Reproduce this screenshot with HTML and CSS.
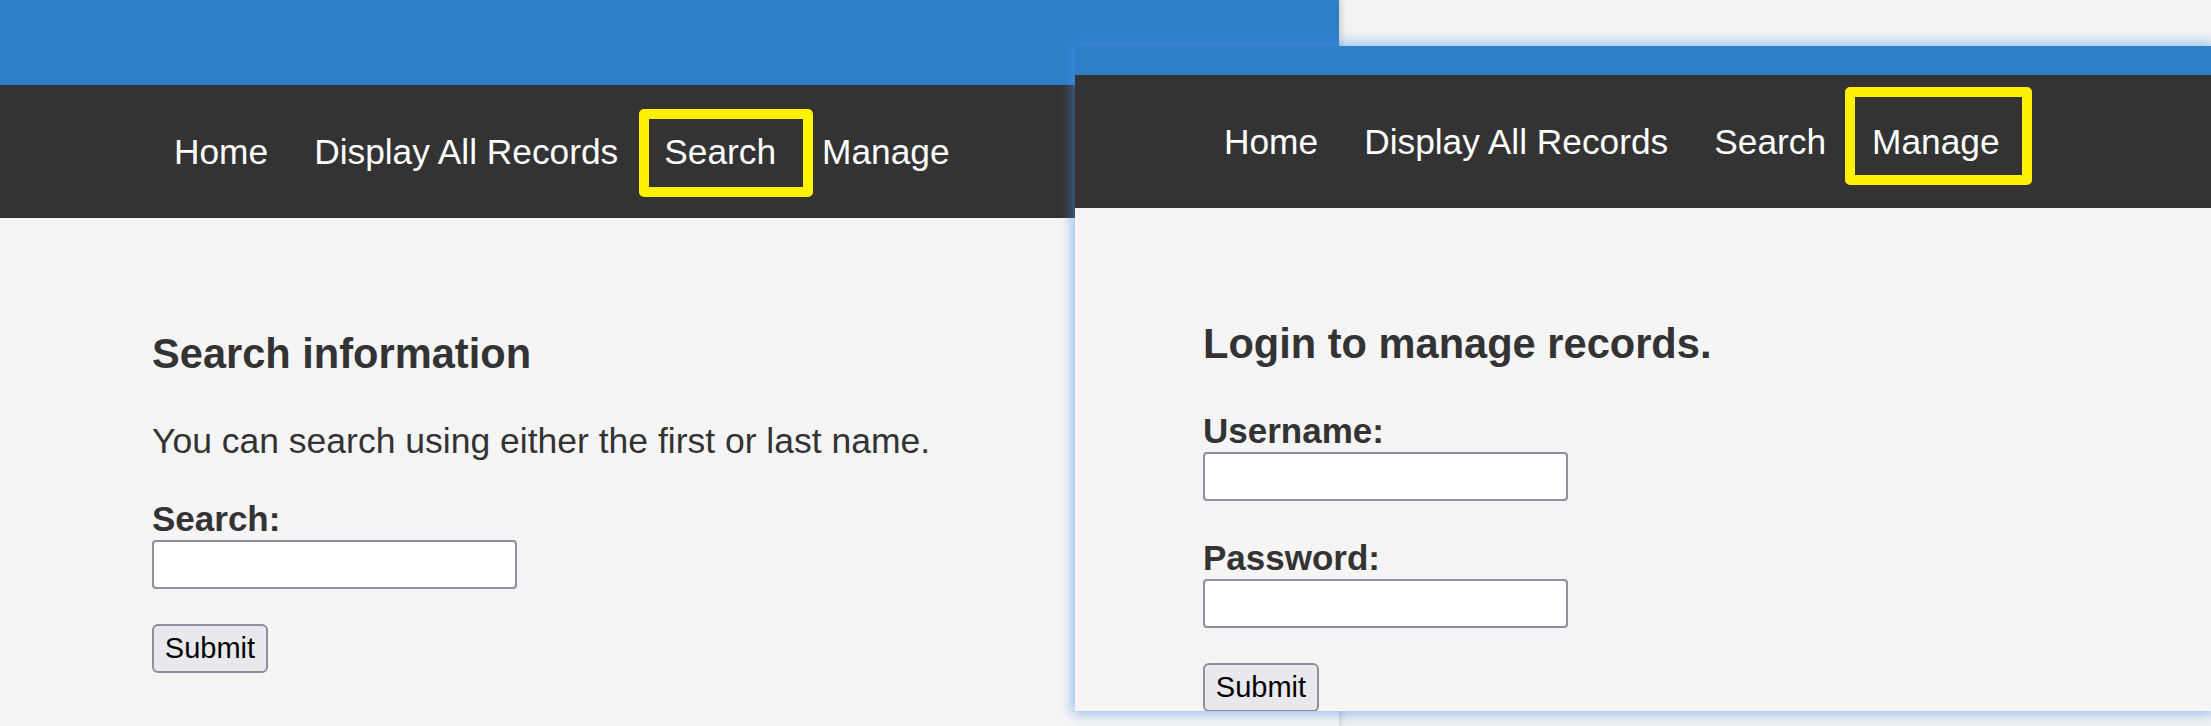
FILE: index.html
```html
<!DOCTYPE html>
<html lang="en">
<head>
<meta charset="utf-8">
<title>Records</title>
<link rel="stylesheet" href="styles.css">
</head>
<body>
<div class="desk">
  <section class="win win-left">
    <header class="hdr hdr-tall"></header>
    <nav class="nav nav-left">
      <a href="#">Home</a>
      <a href="#">Display All Records</a>
      <a href="#" class="mark mark-search">Search</a>
      <a href="#">Manage</a>
    </nav>
    <main class="content content-left">
      <h2 class="title">Search information</h2>
      <p class="intro">You can search using either the first or last name.</p>
      <form class="form">
        <label class="lbl lbl-after-text" for="q">Search:</label>
        <input class="field" id="q" type="text">
        <button class="btn" type="button">Submit</button>
      </form>
    </main>
  </section>

  <section class="win win-right">
    <header class="hdr hdr-short"></header>
    <nav class="nav nav-right">
      <a href="#">Home</a>
      <a href="#">Display All Records</a>
      <a href="#">Search</a>
      <a href="#" class="mark mark-manage">Manage</a>
    </nav>
    <main class="content content-right">
      <h2 class="title">Login to manage records.</h2>
      <form class="form">
        <label class="lbl lbl-after-title" for="u">Username:</label>
        <input class="field" id="u" type="text">
        <label class="lbl lbl-after-field" for="p">Password:</label>
        <input class="field" id="p" type="password">
        <button class="btn" type="button">Submit</button>
      </form>
    </main>
  </section>
</div>
</body>
</html>
```

FILE: styles.css
```css
* {
  box-sizing: border-box;
}

html, body {
  margin: 0;
  padding: 0;
}

body {
  width: 2211px;
  height: 726px;
  overflow: hidden;
  background: #f3f3f3;
  font-family: "Liberation Sans", Arial, sans-serif;
}

.desk {
  position: relative;
  width: 2211px;
  height: 726px;
}

.win {
  display: flex;
  flex-direction: column;
  background: #f5f5f5;
  overflow: hidden;
}

.win-left {
  width: 1339px;
  height: 726px;
  box-shadow: 2px 0 6px rgba(0, 0, 0, 0.16);
}

.win-right {
  position: absolute;
  left: 1075px;
  top: 46px;
  width: 1136px;
  height: 665px;
  box-shadow: 0 0 12px 3px rgba(70, 145, 235, 0.55);
}

.hdr {
  flex: none;
  background: #2d7fc7;
}

.hdr-tall {
  height: 85px;
}

.hdr-short {
  height: 29px;
}

.nav {
  flex: none;
  display: flex;
  height: 133px;
  background: #333333;
}

.nav-left {
  padding-left: 151px;
}

.nav-right {
  padding-left: 126px;
}

.nav a {
  padding: 0 23px;
  color: #ffffff;
  font-size: 35.3px;
  line-height: 133px;
  text-decoration: none;
  white-space: nowrap;
}

.mark {
  position: relative;
}

.mark::after {
  content: "";
  position: absolute;
  border: 10px solid #fff200;
  border-radius: 5px;
}

.mark-search::after {
  left: -2px;
  right: -14px;
  top: 24px;
  bottom: 21px;
}

.mark-manage::after {
  left: -4px;
  right: -9px;
  top: 12px;
  bottom: 23px;
}

.content {
  display: flex;
  flex-direction: column;
  align-items: flex-start;
  color: #333333;
}

.content-left {
  padding-left: 152px;
}

.content-right {
  padding-left: 128px;
}

.title {
  margin: 112px 0 0;
  font-size: 41.6px;
  line-height: 48px;
  font-weight: bold;
  white-space: nowrap;
}

.intro {
  margin: 43px 0 0;
  font-size: 35.5px;
  line-height: 40px;
  white-space: nowrap;
}

.form {
  display: flex;
  flex-direction: column;
  align-items: flex-start;
}

.lbl {
  display: block;
  font-size: 35px;
  line-height: 40px;
  font-weight: bold;
}

.lbl-after-text {
  margin-top: 38px;
}

.lbl-after-title {
  margin-top: 43px;
}

.lbl-after-field {
  margin-top: 37px;
}

.field {
  display: block;
  width: 365px;
  height: 49px;
  margin-top: 1px;
  border: 2px solid #8f8f9d;
  border-radius: 4px;
  background: #ffffff;
}

.btn {
  display: block;
  width: 116px;
  height: 49px;
  margin-top: 35px;
  padding: 0;
  border: 2px solid #8f8f9d;
  border-radius: 6px;
  background: #e9e9ed;
  color: #000000;
  font-family: "Liberation Sans", Arial, sans-serif;
  font-size: 29px;
  line-height: 45px;
}
```
